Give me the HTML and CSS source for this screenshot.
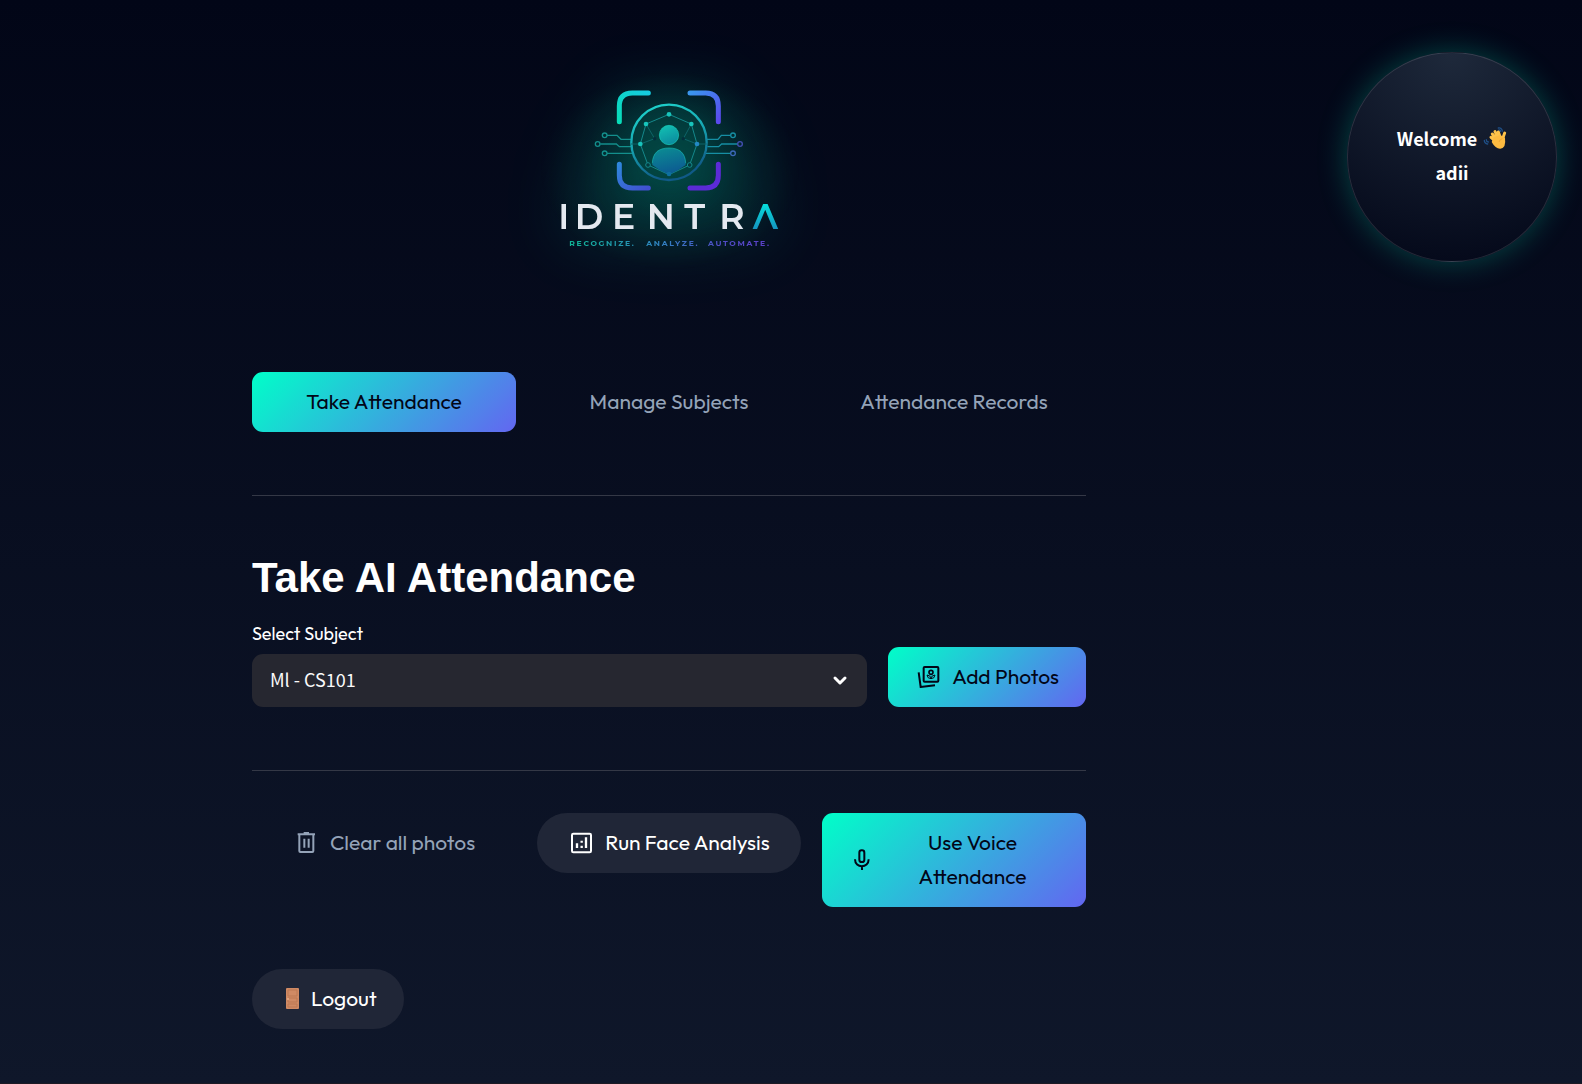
FILE: index.html
```
<!DOCTYPE html>
<html lang="en">
<head>
    <meta charset="UTF-8">
    <title>Identra</title>
    <link rel="stylesheet" href="styles.css">
</head>
<body>
    <main class="content">
        <header class="logo">
            <svg class="logo-art" viewBox="0 0 780 600" role="img" aria-label="Identra">
                <defs>
                    <linearGradient id="ring" x1="0" y1="0" x2="0.3" y2="1">
                        <stop offset="0" stop-color="#1fd8cf"/>
                        <stop offset="0.5" stop-color="#17a9b4"/>
                        <stop offset="1" stop-color="#105a88"/>
                    </linearGradient>
                    <linearGradient id="head" x1="0" y1="0" x2="0.4" y2="1">
                        <stop offset="0" stop-color="#12c4b4"/>
                        <stop offset="1" stop-color="#0c8fa0"/>
                    </linearGradient>
                    <linearGradient id="torso" x1="0" y1="0" x2="0.3" y2="1">
                        <stop offset="0" stop-color="#0b8f93"/>
                        <stop offset="1" stop-color="#0c5c92"/>
                    </linearGradient>
                    <linearGradient id="tl" x1="0" y1="1" x2="1" y2="0">
                        <stop offset="0" stop-color="#08dcb8"/>
                        <stop offset="1" stop-color="#16cbe0"/>
                    </linearGradient>
                    <linearGradient id="tr" x1="0" y1="0" x2="1" y2="1">
                        <stop offset="0" stop-color="#3a96ee"/>
                        <stop offset="1" stop-color="#5a49ee"/>
                    </linearGradient>
                    <linearGradient id="bl" x1="0" y1="0" x2="1" y2="1">
                        <stop offset="0" stop-color="#2f86dc"/>
                        <stop offset="1" stop-color="#4150d0"/>
                    </linearGradient>
                    <linearGradient id="lambda" x1="0" y1="0" x2="0" y2="1">
                        <stop offset="0.2" stop-color="#06e0dc"/>
                        <stop offset="0.8" stop-color="#1593c0"/>
                    </linearGradient>
                    <linearGradient id="tagline" gradientUnits="userSpaceOnUse" x1="90" y1="0" x2="690" y2="0">
                        <stop offset="0" stop-color="#0fb596"/>
                        <stop offset="0.45" stop-color="#3082c0"/>
                        <stop offset="0.75" stop-color="#4f4cc4"/>
                        <stop offset="1" stop-color="#5b3fc8"/>
                    </linearGradient>
                </defs>

                <!-- scan frame -->
                <g fill="none" stroke-width="15" stroke-linecap="round">
                    <path d="M238 155V108Q238 69 277 69H325" stroke="url(#tl)"/>
                    <path d="M450 69H497Q535 69 535 108V155" stroke="url(#tr)"/>
                    <path d="M238 283V316Q238 354 277 354H325" stroke="url(#bl)"/>
                    <path d="M450 354H497Q535 354 535 316V283" stroke="#5b2bd6"/>
                </g>

                <!-- circuit leads -->
                <g fill="none" stroke="#138f8c" stroke-width="4">
                    <path d="M201 196H231L243 208H274M181 222H229L238 230H273M201 250H277"/>
                    <circle cx="194" cy="196" r="7"/>
                    <circle cx="173" cy="222" r="7"/>
                    <circle cx="194" cy="250" r="7"/>
                </g>
                <g fill="none" stroke="#168fa4" stroke-width="4">
                    <path d="M501 208H534L544 196H572M502 230H536L545 222H592M498 250H572"/>
                    <circle cx="579" cy="196" r="7"/>
                    <circle cx="600" cy="222" r="7" stroke="#4350b4"/>
                    <circle cx="579" cy="250" r="7" stroke="#3c68b8"/>
                </g>

                <circle cx="387" cy="217" r="113" fill="#024643" fill-opacity="0.3" stroke="url(#ring)" stroke-width="7"/>

                <!-- face mesh -->
                <g fill="none" stroke="#15898c" stroke-width="3">
                    <path d="M387 133L318 162L301 222L324 285L387 314L449 285L471 222L454 162Z"/>
                    <path d="M318 162L344 206L301 222M454 162L430 206L471 222M273 222H301M471 222H500" stroke="#0e6468"/>
                    <circle cx="324" cy="285" r="7" fill="#043c40"/>
                    <circle cx="449" cy="285" r="7" fill="#043c40"/>
                </g>
                <g fill="#18c5bc">
                    <circle cx="387" cy="133" r="7"/>
                    <circle cx="318" cy="162" r="7"/>
                    <circle cx="301" cy="222" r="7"/>
                    <circle cx="454" cy="162" r="7"/>
                    <circle cx="471" cy="222" r="7" fill="#2388c4"/>
                    <circle cx="344" cy="206" r="5" fill="#042f3c"/>
                    <circle cx="430" cy="206" r="5" fill="#042f3c"/>
                </g>

                <circle cx="387" cy="195" r="29" fill="url(#head)" stroke="#19cfbd" stroke-width="2"/>
                <path d="M337 285C335 250 354 234 387 234C420 234 439 250 437 285Q415 302 387 314Q358 302 337 285Z" fill="url(#torso)"/>
                <path d="M337 280C338 249 356 234 387 234C418 234 436 249 437 280" fill="none" stroke="#15b3aa" stroke-width="2"/>
                <circle cx="387" cy="312" r="7" fill="#0e6fa0"/>

                <text class="wordmark" y="477" x="55 104 216 320 433 538">IDENTR</text>
                <text class="wordmark last" y="477" x="638">Λ</text>
                <text class="tagline" y="528" fill="url(#tagline)"><tspan x="88">RECOGNIZE.</tspan><tspan x="319">ANALYZE.</tspan><tspan x="504">AUTOMATE.</tspan></text>
            </svg>
        </header>

        <nav class="row tabs">
            <button class="btn primary">Take Attendance</button>
            <button class="btn ghost">Manage Subjects</button>
            <button class="btn ghost">Attendance Records</button>
        </nav>

        <hr>

        <h1>Take AI Attendance</h1>

        <form class="subject-form">
            <div class="field">
                <label for="subject">Select Subject</label>
                <div class="select-box">
                    <select id="subject">
                        <option>Ml - CS101</option>
                    </select>
                    <svg class="chevron" viewBox="0 0 24 24"><path d="M8 10L13 15L18 10"/></svg>
                </div>
            </div>
            <button class="btn primary" type="button">
                <svg class="icon" viewBox="352 101 72 72">
                    <rect x="372" y="110" width="44" height="44" rx="3"/>
                    <path d="M357 126L363 170L406 165"/>
                    <circle cx="394" cy="126" r="6" stroke-width="5"/>
                    <path d="M382 134Q383 145 394 145Q405 145 406 134Q396 135 394 143Q392 135 382 134Z" stroke-width="3"/>
                </svg>
                <span>Add Photos</span>
            </button>
        </form>

        <hr>

        <div class="row actions">
            <button class="btn ghost">
                <svg class="icon" viewBox="164 121 72 72">
                    <path d="M172 134H224M190 130H206M177 134V184Q177 187 180 187H216Q219 187 219 184V134M192 147V174M205 147V174"/>
                </svg>
                <span>Clear all photos</span>
            </button>
            <button class="btn pill">
                <svg class="icon" viewBox="120 120 72 72">
                    <rect x="126" y="131" width="57" height="56" rx="4"/>
                    <path d="M141 160V174M155 167V174M155 152V158M168 142V174" stroke-width="7"/>
                </svg>
                <span>Run Face Analysis</span>
            </button>
            <button class="btn primary">
                <svg class="icon" viewBox="152 170 72 72">
                    <rect x="177" y="180" width="15" height="35" rx="7"/>
                    <path d="M164 207C164 235 205 235 205 207M185 228V239"/>
                </svg>
                <span class="grow">Use Voice Attendance</span>
            </button>
        </div>

        <button class="btn pill logout">
            <svg class="icon door" viewBox="0 0 24 24">
                <rect x="6" y="2" width="13" height="21" rx="1" fill="#d08a64"/>
                <path d="M8 4H17V10H8ZM8 12H17V16H8ZM8 18H17V21H8Z" fill="none" stroke="#bd7853" stroke-width="1"/>
                <circle cx="8" cy="13" r="1" fill="#e8b08a"/>
            </svg>
            <span>Logout</span>
        </button>
    </main>

    <aside class="rail">
        <div class="welcome">
            <div class="greeting">
                <span>Welcome</span>
                <svg class="wave" viewBox="0 0 72 72">
                    <g fill="none" stroke="#1f4f86" stroke-width="4" stroke-linecap="round">
                        <path d="M46 6Q56 4 58 15M48 12Q52 11 53 16M4 43Q4 53 14 54M10 41Q10 47 16 48"/>
                    </g>
                    <g fill="none" stroke="#ffc34a" stroke-width="9" stroke-linecap="round">
                        <path d="M42 42L28 24M47 38L36 17M52 35L46 18M38 46L24 34M59 44Q60 32 65 21"/>
                    </g>
                    <path d="M32 34L52 27L66 36Q70 66 52 68Q38 69 26 48Z" fill="#fdbb41"/>
                    <path d="M48 48Q50 40 58 38" fill="none" stroke="#e59a2d" stroke-width="2"/>
                </svg>
            </div>
            <div>adii</div>
        </div>
    </aside>
</body>
</html>
```
FILE: styles.css
```
* {
    box-sizing: border-box;
}

body {
    margin: 0;
    min-height: 100vh;
    display: grid;
    grid-template-columns: 1fr 244px;
    background: linear-gradient(180deg, #020617, #0f172a);
    border-bottom: 1px solid #1c1a24;
    color: #fff;
    font-family: Outfit, Lato, sans-serif;
    font-size: 21px;
}

.content {
    width: 100%;
    max-width: 834px;
    margin: 0 auto;
    padding: 70px 0 54px;
}

.logo {
    display: flex;
    justify-content: center;
    margin-bottom: 102px;
    padding-left: 2px;
}

.logo-art {
    width: 260px;
    height: 200px;
    overflow: visible;
    background: radial-gradient(closest-side, rgba(0, 110, 90, 0.3), rgba(0, 110, 90, 0));
    filter: drop-shadow(0 0 30px rgba(0, 255, 200, 0.4));
}

.wordmark {
    fill: #e4e9f0;
    font-family: Montserrat, "DejaVu Sans", sans-serif;
    font-size: 104px;
    font-weight: 600;
}

.last {
    fill: url(#lambda);
}

.tagline {
    font-family: Montserrat, "DejaVu Sans", sans-serif;
    font-size: 23px;
    font-weight: 700;
    letter-spacing: 5px;
}

.row {
    display: grid;
    grid-template-columns: repeat(3, 1fr);
    gap: 21px;
    align-items: start;
}

.btn {
    display: flex;
    align-items: center;
    justify-content: center;
    gap: 11px;
    padding: 12px 27px 14px 29px;
    border: none;
    border-radius: 11px;
    background: none;
    color: #fff;
    font-family: inherit;
    font-size: 21px;
    line-height: 34px;
    cursor: pointer;
}

.primary {
    background: linear-gradient(135deg, #00ffc8, #6366f1);
    color: #020617;
}

.ghost {
    color: #94a3b8;
}

.pill {
    background: #202637;
    border-radius: 30px;
}

.tabs .btn {
    padding-left: 12px;
    padding-right: 12px;
}

.grow {
    flex: 1;
}

.icon {
    flex: none;
    width: 24px;
    height: 24px;
    fill: none;
    stroke: currentColor;
    stroke-width: 6;
}

.door {
    stroke: none;
}

hr {
    margin: 63px 0 0;
    border: none;
    border-top: 1px solid #343846;
}

h1 {
    margin: 57px 0 18px;
    font-family: "Liberation Sans", Arial, sans-serif;
    font-size: 42px;
    line-height: 50px;
}

.subject-form {
    display: flex;
    align-items: flex-end;
    gap: 21px;
}

.field {
    flex: 1;
}

label {
    display: block;
    margin-bottom: 7px;
    font-size: 18px;
    line-height: 26px;
}

.select-box {
    position: relative;
}

select {
    display: block;
    width: 100%;
    height: 53px;
    padding: 0 48px 4px 18px;
    border: none;
    border-radius: 11px;
    background: #262730;
    color: #fafafa;
    font-family: "Noto Sans CJK SC", sans-serif;
    font-size: 18px;
    appearance: none;
}

.chevron {
    position: absolute;
    top: 14px;
    right: 16px;
    width: 24px;
    height: 24px;
    fill: none;
    stroke: #fff;
    stroke-width: 3;
    stroke-linecap: round;
    stroke-linejoin: round;
    pointer-events: none;
}

.actions {
    margin-top: 42px;
}

.logout {
    margin-top: 62px;
    gap: 7px;
    padding-left: 28px;
}

.rail {
    padding: 52px 25px 0 9px;
}

.welcome {
    display: flex;
    flex-direction: column;
    align-items: center;
    justify-content: center;
    aspect-ratio: 1;
    padding-bottom: 4px;
    border: 1px solid rgba(255, 255, 255, 0.12);
    border-radius: 50%;
    background: radial-gradient(circle at top, #1e293b, #020617);
    box-shadow: 0 0 30px rgba(0, 255, 200, 0.25);
    font-family: "Noto Sans CJK SC", sans-serif;
    font-size: 18px;
    font-weight: bold;
    line-height: 34px;
}

.greeting {
    display: flex;
    align-items: center;
    gap: 6px;
}

.wave {
    width: 24px;
    height: 24px;
}
```
